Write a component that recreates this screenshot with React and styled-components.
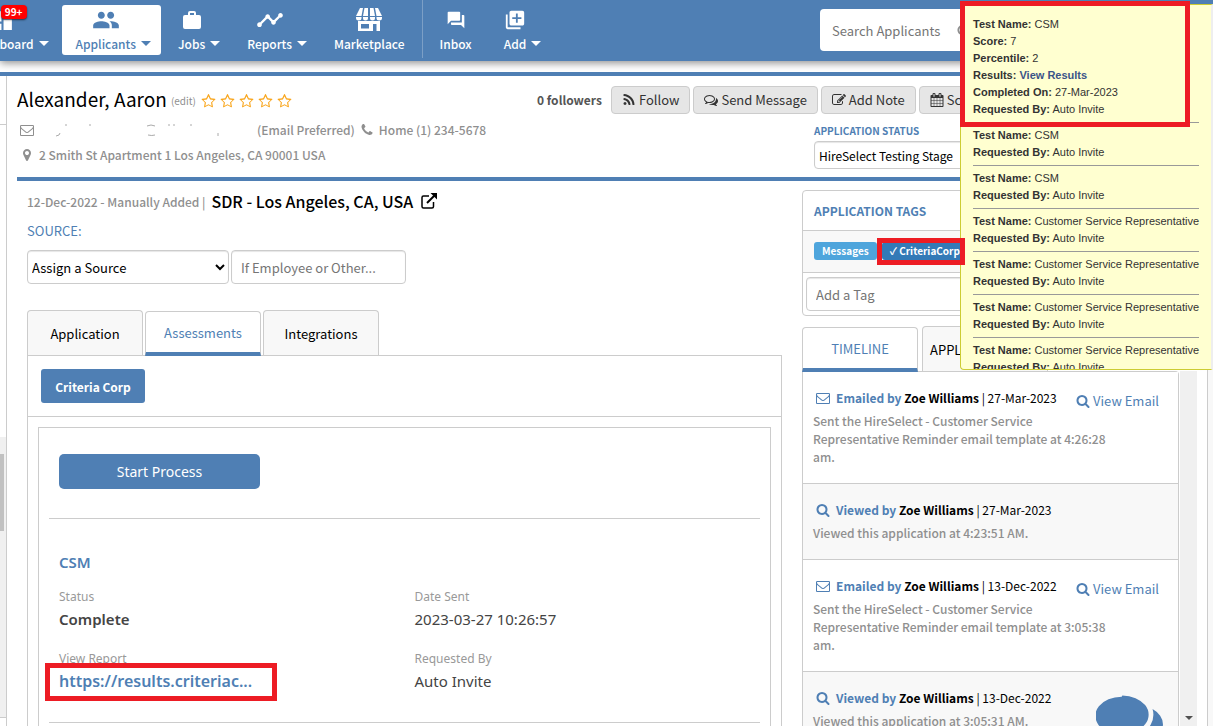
import React from 'react';
import styled, { createGlobalStyle, css } from 'styled-components';
import { MdDashboard, MdPeople, MdForum, MdLibraryAdd, MdTimeline } from 'react-icons/md';

const blue = '#4f7fb4';
const line = '#cccccc';
const grey = '#8f8f8f';
const red = '#ed1c24';

const GlobalStyle = createGlobalStyle`
  * {
    box-sizing: border-box;
  }
  body {
    margin: 0;
    padding-right: 5px;
    background: #fff;
    overflow: hidden;
  }
  body, button, input, select {
    font-family: "Noto Sans CJK SC", "Source Sans Pro", sans-serif;
    font-size: 13px;
  }
  a {
    text-decoration: none;
  }
  h1, h2, h3, p, ul, dl, dd {
    margin: 0;
    padding: 0;
  }
`;

const Page = styled.div`
  position: relative;
  display: flex;
  flex-direction: column;
  height: 100vh;
  overflow: hidden;
  color: #000;
`;

/* ---------- icons ---------- */

const paths = {
  star: 'M1201 1004l306-297-422-62-189-382-189 382-422 62 306 297-73 421 378-199 377 199zm527-389q0 22-26 48l-363 354 86 500q1 7 1 20 0 50-41 50-19 0-40-12l-449-236-449 236q-22 12-40 12-21 0-31.500-14.500t-10.500-35.500q0-6 2-20l86-500-364-354q-25-27-25-48 0-37 56-46l502-73 225-455q19-41 49-41t49 41l225 455 502 73q56 9 56 46z',
  search: 'M1216 832q0-185-131.500-316.500t-316.500-131.500-316.500 131.500-131.500 316.500 131.500 316.500 316.500 131.500 316.500-131.500 131.500-316.500zm512 832q0 52-38 90t-90 38q-54 0-90-38l-343-342q-179 124-399 124-143 0-273.500-55.500t-225-150-150-225-55.500-273.500 55.500-273.500 150-225 225-150 273.500-55.500 273.500 55.500 225 150 150 225 55.500 273.500q0 220-124 399l343 343q37 37 37 90z',
  envelope: 'M1664 1504v-768q-32 36-69 66-268 206-426 338-51 43-83 67t-86.500 48.500-102.500 24.500h-2q-48 0-102.500-24.500t-86.500-48.500-83-67q-158-132-426-338-37-30-69-66v768q0 13 9.500 22.500t22.500 9.500h1472q13 0 22.500-9.500t9.500-22.500zm0-1051v-24.500l-.5-13-3-12.500-5.500-9-9-7.500-14-2.500h-1472q-13 0-22.500 9.500t-9.500 22.500q0 168 147 284 193 152 401 317 6 5 35 29.500t46 37.500 44.500 31.500 50.500 27.500 43 9h2q20 0 43-9t50.500-27.500 44.500-31.500 46-37.500 35-29.500q208-165 401-317 54-43 100.500-115.500t46.500-131.500zm128-37v1088q0 66-47 113t-113 47h-1472q-66 0-113-47t-47-113v-1088q0-66 47-113t113-47h1472q66 0 113 47t47 113z',
  phone: 'M1600 1240q0 27-10 70.500t-21 68.500q-21 50-122 106-94 51-186 51-27 0-52.500-3.500t-57.500-12.500-47.500-14.500-55.500-20.500-49-18q-98-35-175-83-128-79-264.500-215.500t-215.500-264.500q-48-77-83-175-3-9-18-49t-20.500-55.500-14.500-47.500-12.500-57.500-3.500-52.500q0-92 51-186 56-101 106-122 25-11 68.500-21t70.500-10q14 0 21 3 18 6 53 76 11 19 30 54t35 63.500 31 53.500q3 4 17.500 25t21.500 35.500 7 28.500q0 20-28.500 50t-62 55-62 53-28.500 46q0 9 5 22.500t8.500 20.500 14 24 11.500 19q76 137 174 235t235 174q2 1 19 11.500t24 14 20.500 8.500 22.500 5q18 0 46-28.500t53-62 55-62 50-28.500q14 0 28.500 7t35.500 21.500 25 17.500q25 15 53.500 31t63.500 35 54 30q70 35 76 53 3 7 3 21z',
  pin: 'M1152 640q0-106-75-181t-181-75-181 75-75 181 75 181 181 75 181-75 75-181zm256 0q0 109-33 179l-364 774q-16 33-47.500 52t-67.500 19-67.500-19-46.500-52l-365-774q-33-70-33-179 0-212 150-362t362-150 362 150 150 362z',
  rss: 'M576 1344q0 80-56 136t-136 56-136-56-56-136 56-136 136-56 136 56 56 136zm512 123q2 28-17 48-18 21-47 21h-135q-25 0-43-16.500t-20-41.500q-22-229-184.500-391.500t-391.500-184.500q-25-2-41.500-20t-16.500-43v-135q0-29 21-47 17-17 43-17h5q160 13 306 80.500t259 181.500q114 113 181.500 259t80.500 306zm512 2q2 27-18 47-18 20-46 20h-143q-26 0-44.500-17.500t-19.500-42.500q-12-215-101-408.500t-231.500-336-336-231.500-408.500-102q-25-1-42.500-19.500t-17.500-43.500v-143q0-28 20-46 18-18 44-18h3q262 13 501.500 120t425.500 294q187 186 294 425.500t120 501.500z',
  comments: 'M704 384q-153 0-286 52t-211.500 141-78.500 191q0 82 53 158t149 132l97 56-35 84q34-20 62-39l44-31 53 10q78 14 153 14 153 0 286-52t211.500-141 78.500-191-78.500-191-211.500-141-286-52zm0-128q191 0 353.500 68.500t256.500 186.500 94 257-94 257-256.500 186.500-353.500 68.500q-86 0-176-16-124 88-278 128-36 9-86 16h-3q-11 0-20.500-8t-11.500-21q-1-3-1-6.500t.5-6.500 2-6l2.500-5t3.500-5.500 4-5 4.500-5 4-4.500q5-6 23-25t26-29.500 22.500-29 25-38.500 20.500-44q-124-72-195-177t-71-224q0-139 94-257t256.500-186.500 353.500-68.500zm822 1169q10 24 20.500 44t25 38.500 22.500 29 26 29.500 23 25q1 1 4 4.500t4.500 5 4 5 3.500 5.500l2.500 5t2 6 .5 6.500-1 6.500q-3 14-13 22t-22 7q-50-7-86-16-154-40-278-128-90 16-176 16-271 0-472-132 58 4 88 4 161 0 309-45t264-129q125-92 192-212t67-254q0-77-23-152 129 71 204 178t75 230q0 120-71 224.500t-195 176.500z',
  chat: 'M704 256q191 0 353.500 68.500t256.500 186.500 94 257-94 257-256.500 186.500-353.500 68.500q-86 0-176-16-124 88-278 128-36 9-86 16h-3q-11 0-20.500-8t-11.500-21q20-40 120-180-124-72-195-177t-71-224q0-139 94-257t256.500-186.500 353.500-68.500zm822 1169q10 24 20.500 44t25 38.500 22.500 29 26 29.500 23 25q20 25 19 45-3 14-13 22t-22 7q-50-7-86-16-154-40-278-128-90 16-176 16-271 0-472-132 58 4 88 4 161 0 309-45t264-129q125-92 192-212t67-254q0-77-23-152 129 71 204 178t75 230q0 120-71 224.500t-195 176.500z',
  edit: 'M888 1184l116-116-152-152-116 116v56h96v96h56zm440-720q-16-16-33 1l-350 350q-17 17-1 33t33-1l350-350q17-17 1-33zm80 594v190q0 119-84.500 203.500t-203.500 84.500h-832q-119 0-203.500-84.500t-84.500-203.500v-832q0-119 84.500-203.500t203.500-84.500h832q63 0 117 25 15 7 18 23 3 17-9 29l-49 49q-14 14-32 8-23-6-45-6h-832q-66 0-113 47t-47 113v832q0 66 47 113t113 47h832q66 0 113-47t47-113v-126q0-13 9-22l64-64q15-15 35-7t20 29zm-96-738l288 288-672 672h-288v-288zm444 132l-92 92-288-288 92-92q28-28 68-28t68 28l152 152q28 28 28 68t-28 68z',
  calendar: 'M192 1664h288v-288h-288v288zm352 0h320v-288h-320v288zm-352-352h288v-320h-288v320zm352 0h320v-320h-320v320zm-352-384h288v-288h-288v288zm736 736h320v-288h-320v288zm-384-736h320v-288h-320v288zm768 736h288v-288h-288v288zm-384-352h320v-320h-320v320zm-352-864v-288q0-13-9.500-22.500t-22.500-9.500h-64q-13 0-22.500 9.500t-9.500 22.500v288q0 13 9.500 22.500t22.500 9.500h64q13 0 22.500-9.500t9.500-22.500zm736 864h288v-320h-288v320zm-384-384h320v-288h-320v288zm384 0h288v-288h-288v288zm32-480v-288q0-13-9.500-22.500t-22.500-9.500h-64q-13 0-22.500 9.500t-9.500 22.500v288q0 13 9.500 22.500t22.500 9.500h64q13 0 22.500-9.500t9.500-22.500zm384-64v1280q0 52-38 90t-90 38h-1408q-52 0-90-38t-38-90v-1280q0-52 38-90t90-38h128v-96q0-66 47-113t113-47h64q66 0 113 47t47 113v96h384v-96q0-66 47-113t113-47h64q66 0 113 47t47 113v96h128q52 0 90 38t38 90z',
};

const Icon = ({ name, size = 14 }) => (
  <svg width={size} height={size} viewBox="0 0 1792 1792" fill="currentColor" aria-hidden="true">
    <path d={paths[name]} />
  </svg>
);

const BriefcaseIcon = () => (
  <svg width="20" height="20" viewBox="0 0 20 20" fill="currentColor" aria-hidden="true">
    <path d="M6 5V3q0-2 2-2h4q2 0 2 2v2h3q2 0 2 2v10q0 2-2 2H3q-2 0-2-2V7q0-2 2-2zm2 0h4V3H8z" />
  </svg>
);

const StoreIcon = () => (
  <svg width="26" height="24" viewBox="0 0 26 24" fill="currentColor" aria-hidden="true">
    <path d="M4 0h3L5.500 8H0zM8.500 0h3.500v8H7zM14 0h3.500L19 8h-5zM19 0h3l4 8h-5.500z" />
    <path d="M0 9h5.500v1a2.750 2.500 0 0 1-5.500 0zM7 9h5v1a2.500 2.500 0 0 1-5 0zM14 9h5v1a2.500 2.500 0 0 1-5 0zM20.500 9H26v1a2.750 2.500 0 0 1-5.500 0z" />
    <path fillRule="evenodd" d="M2 13h22v10h-3.500v-7H17v7H2zm3 3v4.500h8V16z" />
  </svg>
);

const OpenIcon = () => (
  <svg width="16" height="16" viewBox="0 0 16 16" fill="none" stroke="#000" strokeWidth="1.500" aria-hidden="true">
    <path d="M8 3H2.500Q1 3 1 4.500v9Q1 15 2.500 15h8.500q1.500 0 1.500-1.500V9" />
    <path d="M6 10L14 2" strokeWidth="2" />
    <path d="M9.500 0H16v6.500z" fill="#000" stroke="none" />
  </svg>
);

/* ---------- navigation ---------- */

const Nav = styled.nav`
  display: flex;
  flex: none;
  height: 61px;
  padding-top: 5px;
  background: ${blue};
  box-shadow: 0 2px 8px rgba(0, 0, 0, 0.45);
`;

const NavGroup = styled.div`
  display: flex;
  gap: ${(p) => p.$gap || 3}px;
`;

const NavItem = styled.a`
  position: relative;
  display: flex;
  align-items: flex-end;
  gap: 5px;
  height: 50px;
  padding: 0 10px 1px 14px;
  border-radius: 3px;
  color: ${(p) => (p.$active ? blue : '#fff')};
  background: ${(p) => (p.$active ? '#fff' : 'transparent')};
  font-size: 12px;
  font-weight: 500;
  line-height: 20px;
  ${(p) => p.$clipped && css`margin-left: -43px;`}
`;

const NavLabel = styled.span`
  display: flex;
  flex-direction: column;
  align-items: center;
`;

const NavIcon = styled.span`
  display: flex;
  align-items: center;
  height: 28px;
`;

const Caret = styled.i`
  margin-bottom: 8px;
  border: 5px solid transparent;
  border-top-color: currentColor;
  border-bottom: 0;
`;

const Badge = styled.span`
  position: absolute;
  top: 0;
  right: 32px;
  padding: 0 4px;
  border-radius: 4px;
  background: #f00;
  box-shadow: 0 1px 2px rgba(0, 0, 0, 0.6);
  color: #fff;
  font-size: 10px;
  font-weight: 700;
  line-height: 14px;
`;

const NavDivider = styled.span`
  width: 1px;
  height: 58px;
  margin: -5px 3px 0 7px;
  background: #7c9fc6;
`;

const SearchBox = styled.label`
  display: flex;
  align-items: center;
  width: 190px;
  height: 42px;
  margin: 4px 203px 0 auto;
  padding: 0 12px;
  border-radius: 4px;
  background: #fff;
  color: ${grey};
`;

const SearchInput = styled.input`
  width: 125px;
  padding: 0;
  border: 0;
  outline: 0;
  &::placeholder {
    color: #757575;
  }
`;

const NavStrip = styled.div`
  flex: none;
  height: 15px;
  border-bottom: 4px solid ${blue};
`;

/* ---------- frame ---------- */

const Frame = styled.div`
  display: flex;
  flex: 1;
  min-height: 0;
`;

const LeftRail = styled.div`
  display: flex;
  flex: 0 0 7px;
  flex-direction: column;
  border-right: 1px solid ${line};
`;

const RailTop = styled.div`
  flex: 0 0 49px;
  border-bottom: 1px solid ${line};
`;

const RailScroll = styled.div`
  flex: 1;
  margin: 312px 0 8px;
  padding-top: 17px;
  border-bottom: 1px solid ${line};
  background: #f0f0f0;
`;

const RailThumb = styled.div`
  width: 4px;
  height: 77px;
  background: #c1c1c1;
`;

const RightRail = styled.div`
  flex: 0 0 6px;
  border-left: 1px solid ${line};
  background: #f8f8f8;
`;

const Content = styled.main`
  display: flex;
  flex: 1;
  flex-direction: column;
  min-width: 0;
  padding: 0 10px;
`;

/* ---------- applicant header ---------- */

const Header = styled.header`
  flex: none;
  padding-top: 8px;
  border-bottom: 4px solid ${blue};
`;

const HeaderRow = styled.div`
  display: flex;
  justify-content: space-between;
`;

const NameLine = styled.div`
  display: flex;
  align-items: center;
  height: 30px;
`;

const Name = styled.h1`
  font-size: 19px;
  font-weight: 400;
  line-height: 30px;
`;

const EditLink = styled.a`
  margin: 4px 5px 0 4px;
  color: ${grey};
  font-size: 10px;
  line-height: 20px;
`;

const Stars = styled.span`
  display: flex;
  gap: 4px;
  margin-top: 4px;
  color: #f9a51a;
`;

const Actions = styled.div`
  display: flex;
  flex: 0 0 660px;
  gap: 3px;
  padding-top: 2px;
`;

const Followers = styled.span`
  margin-right: 6px;
  color: #555;
  font-size: 12px;
  font-weight: 700;
  line-height: 28px;
`;

const ActionButton = styled.button`
  display: flex;
  align-items: center;
  gap: 3px;
  height: 28px;
  padding: 0 10px;
  border: 1px solid ${line};
  border-radius: 4px;
  background: #e6e6e6;
  color: #333;
  line-height: 20px;
`;

const Contact = styled.address`
  padding-top: 3px;
  color: ${grey};
  font-size: 12px;
  font-style: normal;
  font-weight: 500;
`;

const ContactLine = styled.p`
  display: flex;
  align-items: center;
  gap: 5px;
  height: 25px;
  padding-left: 3px;
`;

const HiddenEmail = styled.svg`
  margin-left: 17px;
`;

const StatusBlock = styled.div`
  flex: 0 0 383px;
  height: 63px;
`;

const StatusLabel = styled.label`
  display: block;
  color: ${blue};
  font-size: 10px;
  font-weight: 700;
  line-height: 16px;
  padding: 9px 0 2px;
`;

const field = css`
  border: 1px solid ${line};
  border-radius: 4px;
  background: #fff;
  box-shadow: inset 0 1px 1px rgba(0, 0, 0, 0.1);
  color: #000;
`;

const StatusSelect = styled.select`
  ${field}
  width: 300px;
  height: 28px;
  padding: 0;
  font-size: 12px;
`;

/* ---------- left column ---------- */

const Columns = styled.div`
  display: flex;
  flex: 1;
  gap: 20px;
  min-height: 0;
  padding: 8px 0 0 10px;
`;

const MainColumn = styled.section`
  display: flex;
  flex: 1;
  flex-direction: column;
  min-width: 0;
`;

const JobLine = styled.p`
  display: flex;
  align-items: center;
  height: 24px;
  color: ${grey};
  font-size: 12px;
  font-weight: 500;
`;

const JobTitle = styled.strong`
  margin: 0 8px 0 6px;
  color: #000;
  font-size: 16px;
  font-weight: 500;
`;

const SourceLabel = styled.label`
  height: 37px;
  padding-top: 8px;
  color: ${blue};
  line-height: 20px;
`;

const SourceRow = styled.div`
  display: flex;
  gap: 2px;
  margin-bottom: 26px;
`;

const SourceSelect = styled.select`
  ${field}
  width: 202px;
  height: 34px;
  padding: 0;
`;

const TextInput = styled.input`
  ${field}
  width: ${(p) => p.$width};
  height: 34px;
  padding: 0 9px;
  &::placeholder {
    color: #757575;
  }
`;

const Tabs = styled.div`
  display: flex;
  align-items: flex-end;
  gap: ${(p) => p.$gap}px;
  height: 45px;
`;

const Tab = styled.button`
  flex: none;
  width: ${(p) => p.$width || 116}px;
  height: 45px;
  padding: 0;
  border: 1px solid ${line};
  border-bottom: 0;
  border-radius: 4px 4px 0 0;
  background: #f8f8f8;
  color: #000;
  text-align: center;
  ${(p) => p.$left && css`
    padding-left: 7px;
    text-align: left;
  `}
  ${(p) => p.$active && css`
    position: relative;
    margin-bottom: -1px;
    border-bottom: 4px solid ${blue};
    background: #fff;
    color: ${blue};
  `}
`;

const Panel = styled.div`
  flex: 1;
  min-height: 0;
  overflow: hidden;
  border: 1px solid ${line};
  border-bottom: 0;
`;

const PanelBar = styled.div`
  height: 61px;
  padding: 13px;
  border-bottom: 1px solid ${line};
`;

const CorpButton = styled.button`
  height: 34px;
  width: 104px;
  padding: 0;
  border: 0;
  border-radius: 3px;
  background: ${blue};
  color: #fff;
  font-size: 12px;
  font-weight: 700;
`;

const Detail = styled.div`
  height: 400px;
  margin: 10px 10px 0;
  padding: 26px 10px 0;
  border: 1px solid ${line};
  border-bottom: 0;
  font-family: "Noto Sans", "Trebuchet MS", sans-serif;
`;

const StartButton = styled.button`
  display: block;
  width: 201px;
  height: 35px;
  margin: 0 10px 29px;
  border: 0;
  border-radius: 5px;
  background: ${blue};
  color: #fff;
  font-family: inherit;
  font-size: 14px;
`;

const Rule = styled.hr`
  margin: 0;
  border: 0;
  border-top: 1px solid ${line};
`;

const TestName = styled.h2`
  padding: 33px 10px 15px;
  color: ${blue};
  font-size: 15px;
  font-weight: 600;
  line-height: 20px;
`;

const Fields = styled.dl`
  display: grid;
  grid-template-columns: 1fr 1fr;
  row-gap: 18px;
  padding-bottom: 29px;
`;

const Field = styled.div`
  padding-left: 10px;
`;

const FieldName = styled.dt`
  color: #999;
  font-size: 12px;
  line-height: 20px;
`;

const FieldValue = styled.dd`
  position: relative;
  color: #444;
  font-size: 15px;
  font-weight: ${(p) => (p.$strong ? 600 : 400)};
  line-height: 24px;
`;

const ReportLink = styled.a`
  color: ${blue};
  font-size: 16px;
`;

const LinkMark = styled.span`
  position: absolute;
  top: -6px;
  left: -14px;
  width: 232px;
  height: 38px;
  border: 5px solid ${red};
`;

/* ---------- right column ---------- */

const SideColumn = styled.aside`
  display: flex;
  flex: 0 0 395px;
  flex-direction: column;
  margin-top: 1px;
`;

const TagPanel = styled.div`
  height: 126px;
  flex: none;
  margin-bottom: 10px;
  border: 1px solid ${line};
  border-radius: 4px;
`;

const TagTitle = styled.h3`
  padding: 10px 11px;
  border-bottom: 1px solid ${line};
  color: ${blue};
  font-size: 12px;
  font-weight: 700;
  line-height: 19px;
`;

const TagList = styled.div`
  display: flex;
  gap: 5px;
  height: 42px;
  padding: 11px;
  border-bottom: 1px solid ${line};
  background: #f8f8f8;
`;

const Tag = styled.span`
  position: relative;
  height: 18px;
  padding: 0 8px;
  border-radius: 3px;
  background: ${(p) => p.$color};
  color: #fff;
  font-size: 10px;
  font-weight: 700;
  line-height: 18px;
`;

const TagMark = styled.span`
  position: absolute;
  z-index: 3;
  top: -4px;
  left: -5px;
  width: 88px;
  height: 27px;
  border: 5px solid ${red};
`;

const TagEntry = styled.div`
  padding: 4px 3px;
`;

const TimelineScroll = styled.div`
  display: flex;
  flex: 1;
  min-height: 0;
`;

const Timeline = styled.ul`
  flex: 1;
  border: 1px solid ${line};
  border-bottom: 0;
  border-top-right-radius: 4px;
  list-style: none;
`;

const Event = styled.li`
  padding: 16px 19px 17px 10px;
  border-bottom: 1px solid ${line};
  background: ${(p) => (p.$shaded ? '#f8f8f8' : '#fff')};
`;

const EventTop = styled.div`
  display: flex;
  justify-content: space-between;
  height: 20px;
  margin-bottom: 4px;
  font-size: 12px;
  line-height: 20px;
`;

const EventTitle = styled.span`
  display: flex;
  align-items: center;
  gap: 6px;
  padding-left: 3px;
  color: ${blue};
  font-weight: 700;
  white-space: pre;
  em {
    color: #000;
    font-style: normal;
    font-weight: 400;
  }
  b {
    font-weight: 700;
  }
`;

const ViewEmail = styled.a`
  display: flex;
  align-items: center;
  gap: 3px;
  padding-top: 3px;
  margin-bottom: -3px;
  color: ${blue};
  font-size: 13px;
`;

const EventText = styled.p`
  max-width: 298px;
  color: ${grey};
  font-size: 12px;
  font-weight: 500;
  line-height: 18px;
`;

const Scrollbar = styled.div`
  display: flex;
  flex: 0 0 17px;
  align-items: flex-end;
  justify-content: center;
  margin-left: 1px;
  background: #f0f0f0;
  color: #505050;
`;

const ScrollArrow = styled.i`
  margin-bottom: 6px;
  border: 4px solid transparent;
  border-top-color: currentColor;
  border-bottom: 0;
`;

/* ---------- overlays ---------- */

const Tooltip = styled.div`
  position: absolute;
  z-index: 2;
  top: 4px;
  right: 0;
  width: 253px;
  height: 366px;
  padding: 11px 12px 0;
  overflow: hidden;
  border: 1px solid #cccc33;
  border-right: 2px solid #eee;
  border-radius: 0 0 0 4px;
  background: #ffffd0;
  color: #333;
  font-family: "Liberation Sans", Arial, sans-serif;
  font-size: 11px;
  line-height: 17px;
  white-space: nowrap;
  hr {
    margin: 4px 0;
    border: 0;
    border-top: 1px solid #999;
  }
  a {
    color: #3b5488;
    font-weight: 700;
  }
`;

const ResultMark = styled.div`
  position: absolute;
  z-index: 3;
  top: 1px;
  right: 23px;
  width: 230px;
  height: 126px;
  border: 5px solid ${red};
`;

const ChatButton = styled.button`
  position: absolute;
  z-index: 2;
  right: 50px;
  bottom: -27px;
  padding: 0;
  border: 0;
  background: none;
  color: ${blue};
  line-height: 0;
`;

const navItems = [
  { label: 'Dashboard', icon: <MdDashboard size={25} />, caret: true, badge: '99+' },
  { label: 'Applicants', icon: <MdPeople size={28} />, caret: true, active: true },
  { label: 'Jobs', icon: <BriefcaseIcon />, caret: true },
  { label: 'Reports', icon: <MdTimeline size={28} />, caret: true },
  { label: 'Marketplace', icon: <StoreIcon /> },
];

const quickItems = [
  { label: 'Inbox', icon: <MdForum size={20} /> },
  { label: 'Add', icon: <MdLibraryAdd size={22} />, caret: true },
];

const tests = [
  [
    ['Test Name', 'CSM'],
    ['Score', '7'],
    ['Percentile', '2'],
    ['Results', <a href="#results">View Results</a>],
    ['Completed On', '27-Mar-2023'],
    ['Requested By', 'Auto Invite'],
  ],
  ...['CSM', 'CSM', ...Array(4).fill('Customer Service Representative')].map((name) => [
    ['Test Name', name],
    ['Requested By', 'Auto Invite'],
  ]),
];

const events = [
  { kind: 'Emailed', date: '27-Mar-2023', text: 'Sent the HireSelect - Customer Service Representative Reminder email template at 4:26:28 am.' },
  { kind: 'Viewed', date: '27-Mar-2023', text: 'Viewed this application at 4:23:51 AM.' },
  { kind: 'Emailed', date: '13-Dec-2022', text: 'Sent the HireSelect - Customer Service Representative Reminder email template at 3:05:38 am.' },
  { kind: 'Viewed', date: '13-Dec-2022', text: 'Viewed this application at 3:05:31 AM.' },
];

const renderNav = (item) => (
  <NavItem key={item.label} href="#" $active={item.active} $clipped={!!item.badge}>
    <NavLabel>
      <NavIcon>{item.icon}</NavIcon>
      {item.label}
    </NavLabel>
    {item.caret && <Caret />}
    {item.badge && <Badge>{item.badge}</Badge>}
  </NavItem>
);

const App = () => {
  return (
    <Page>
      <GlobalStyle />
      <Nav>
        <NavGroup>{navItems.map(renderNav)}</NavGroup>
        <NavDivider />
        <NavGroup $gap={8}>{quickItems.map(renderNav)}</NavGroup>
        <SearchBox>
          <SearchInput type="search" placeholder="Search Applicants" aria-label="Search Applicants" />
          <Icon name="search" size={13} />
        </SearchBox>
      </Nav>
      <NavStrip />

      <Frame>
        <LeftRail>
          <RailTop />
          <RailScroll><RailThumb /></RailScroll>
        </LeftRail>

        <Content>
          <Header>
            <HeaderRow>
              <NameLine>
                <Name>Alexander, Aaron</Name>
                <EditLink href="#edit">(edit)</EditLink>
                <Stars>
                  {[1, 2, 3, 4, 5].map((n) => <Icon key={n} name="star" size={15} />)}
                </Stars>
              </NameLine>
              <Actions>
                <Followers>0 followers</Followers>
                <ActionButton><Icon name="rss" />Follow</ActionButton>
                <ActionButton><Icon name="comments" />Send Message</ActionButton>
                <ActionButton><Icon name="edit" />Add Note</ActionButton>
                <ActionButton><Icon name="calendar" />Schedule</ActionButton>
              </Actions>
            </HeaderRow>
            <HeaderRow>
              <Contact>
                <ContactLine>
                  <Icon name="envelope" />
                  {/* address is masked, only the tips of the letters stay */}
                  <HiddenEmail width="196" height="14" viewBox="0 0 196 14" fill="none" stroke="#aaa" aria-hidden="true">
                    <path d="M0 13l3-1 1-2M9 2h2M33 2h2M91 3q4-2 8 0M92 12q4 1 7 0M112 2h2M117 2h2M134 2h2M162 10v3" />
                  </HiddenEmail>
                  (Email Preferred)
                  <Icon name="phone" />
                  Home (1) 234-5678
                </ContactLine>
                <ContactLine>
                  <Icon name="pin" />
                  2 Smith St Apartment 1 Los Angeles, CA 90001 USA
                </ContactLine>
              </Contact>
              <StatusBlock>
                <StatusLabel htmlFor="status">APPLICATION STATUS</StatusLabel>
                <StatusSelect id="status">
                  <option>HireSelect Testing Stage</option>
                </StatusSelect>
              </StatusBlock>
            </HeaderRow>
          </Header>

          <Columns>
            <MainColumn>
              <JobLine>
                12-Dec-2022 - Manually Added |
                <JobTitle>SDR - Los Angeles, CA, USA</JobTitle>
                <OpenIcon />
              </JobLine>
              <SourceLabel htmlFor="source">SOURCE:</SourceLabel>
              <SourceRow>
                <SourceSelect id="source">
                  <option>Assign a Source</option>
                </SourceSelect>
                <TextInput $width="175px" placeholder="If Employee or Other..." aria-label="Other source" />
              </SourceRow>
              <Tabs $gap={2}>
                <Tab>Application</Tab>
                <Tab $active>Assessments</Tab>
                <Tab>Integrations</Tab>
              </Tabs>
              <Panel>
                <PanelBar>
                  <CorpButton>Criteria Corp</CorpButton>
                </PanelBar>
                <Detail>
                  <StartButton>Start Process</StartButton>
                  <Rule />
                  <TestName>CSM</TestName>
                  <Fields>
                    <Field>
                      <FieldName>Status</FieldName>
                      <FieldValue $strong>Complete</FieldValue>
                    </Field>
                    <Field>
                      <FieldName>Date Sent</FieldName>
                      <FieldValue>2023-03-27 10:26:57</FieldValue>
                    </Field>
                    <Field>
                      <FieldName>View Report</FieldName>
                      <FieldValue $strong>
                        <ReportLink href="#report">https://results.criteriac...</ReportLink>
                        <LinkMark />
                      </FieldValue>
                    </Field>
                    <Field>
                      <FieldName>Requested By</FieldName>
                      <FieldValue>Auto Invite</FieldValue>
                    </Field>
                  </Fields>
                  <Rule />
                </Detail>
              </Panel>
            </MainColumn>

            <SideColumn>
              <TagPanel>
                <TagTitle>APPLICATION TAGS</TagTitle>
                <TagList>
                  <Tag $color="#4ea5dc">Messages</Tag>
                  <Tag $color="#337ab7">
                    ✓ CriteriaCorp
                    <TagMark />
                  </Tag>
                </TagList>
                <TagEntry>
                  <TextInput $width="100%" placeholder="Add a Tag" aria-label="Add a Tag" />
                </TagEntry>
              </TagPanel>
              <Tabs $gap={4}>
                <Tab $active>TIMELINE</Tab>
                <Tab $width={126} $left>APPLICATION</Tab>
              </Tabs>
              <TimelineScroll>
                <Timeline>
                  {events.map((e, i) => (
                    <Event key={i} $shaded={i % 2 === 1}>
                      <EventTop>
                        <EventTitle>
                          <Icon name={e.kind === 'Emailed' ? 'envelope' : 'search'} />
                          <span>{e.kind} by <em><b>Zoe Williams</b> | {e.date}</em></span>
                        </EventTitle>
                        {e.kind === 'Emailed' && (
                          <ViewEmail href="#email"><Icon name="search" />View Email</ViewEmail>
                        )}
                      </EventTop>
                      <EventText>{e.text}</EventText>
                    </Event>
                  ))}
                </Timeline>
                <Scrollbar><ScrollArrow /></Scrollbar>
              </TimelineScroll>
            </SideColumn>
          </Columns>
        </Content>
        <RightRail />
      </Frame>

      <Tooltip role="tooltip">
        {tests.map((rows, i) => (
          <React.Fragment key={i}>
            {i > 0 && <hr />}
            {rows.map(([name, value]) => (
              <div key={name}><b>{name}:</b> {value}</div>
            ))}
          </React.Fragment>
        ))}
      </Tooltip>
      <ResultMark />
      <ChatButton aria-label="Open chat"><Icon name="chat" size={67} /></ChatButton>
    </Page>
  );
};

export default App;
